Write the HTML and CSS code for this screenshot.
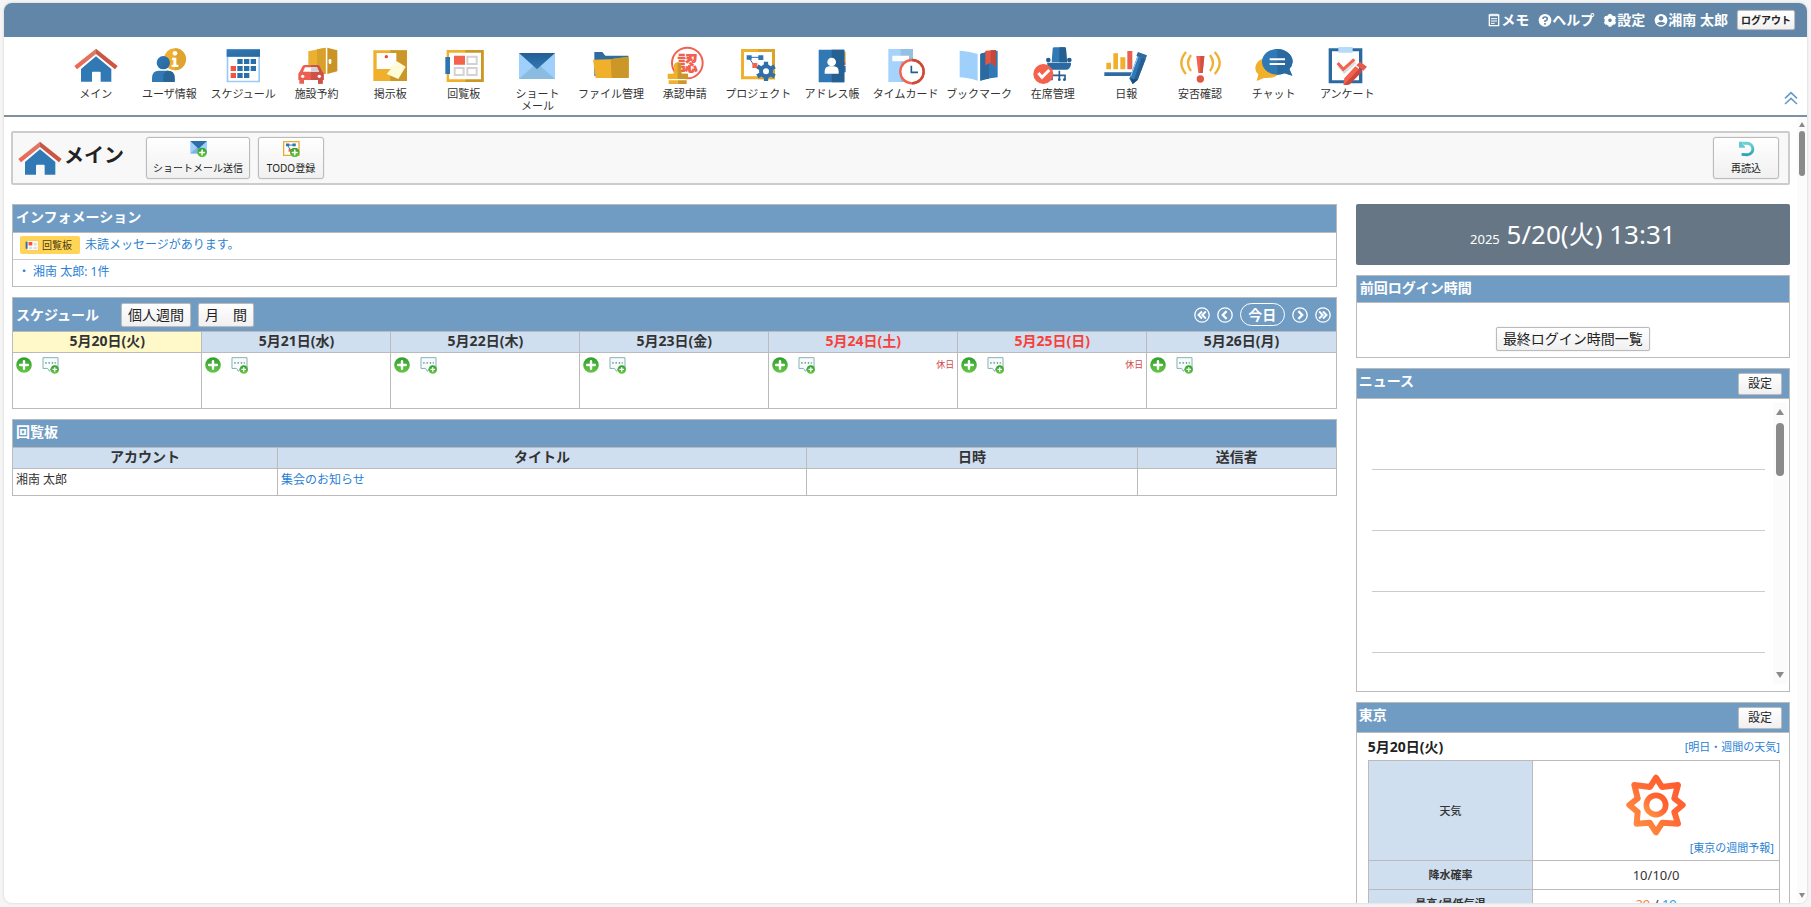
FILE: index.html
```
<!DOCTYPE html>
<html lang="ja">
<head>
<meta charset="utf-8">
<title>メイン</title>
<link rel="stylesheet" href="styles.css">
</head>
<body>
<svg class="defs" aria-hidden="true">
  <defs>
    <linearGradient id="g-green" x1="0" y1="0" x2="0" y2="1"><stop offset="0" stop-color="#2f9e2f"/><stop offset="1" stop-color="#66c844"/></linearGradient>
    <linearGradient id="g-blue" x1="0" y1="0" x2="1" y2="1"><stop offset="0" stop-color="#3079b9"/><stop offset="1" stop-color="#2a679b"/></linearGradient>
    <linearGradient id="g-navy" x1="0" y1="0" x2="0" y2="1"><stop offset="0" stop-color="#225e92"/><stop offset="1" stop-color="#3079b9"/></linearGradient>
    <linearGradient id="g-teal" x1="0" y1="0" x2="0" y2="1"><stop offset="0" stop-color="#6fd0d6"/><stop offset="1" stop-color="#2aa6b4"/></linearGradient>
    <linearGradient id="g-sun" x1="1" y1="0" x2="0" y2="1"><stop offset="0" stop-color="#ff5a2c"/><stop offset=".45" stop-color="#ff6a35"/><stop offset="1" stop-color="#ff9445"/></linearGradient>
    <linearGradient id="g-roof" x1="0" y1="0" x2="1" y2="0"><stop offset="0" stop-color="#f2644f"/><stop offset=".5" stop-color="#d97a6c"/><stop offset=".5" stop-color="#c25a4a"/><stop offset="1" stop-color="#d4513f"/></linearGradient>
    <symbol id="i-home" viewBox="0 0 132 102">
      <path d="M66 25 112 63V101H80V74Q80 71 77 71H57Q54 71 54 74V101H21V63Z" fill="#3079b4"/>
      <path d="M66 2 131 54 123 64 66 18 9 64 1 54Z" fill="url(#g-roof)"/>
    </symbol>
    <symbol id="i-plus" viewBox="0 0 46 46">
      <circle cx="23" cy="23" r="22.500" fill="url(#g-green)"/>
      <path d="M23 12V34M12 23H34" stroke="#fff" stroke-width="7" stroke-linecap="round"/>
    </symbol>
    <symbol id="i-msg" viewBox="0 0 52 52">
      <path d="M3 2H49V35H28L23 44 17 35H3Z" fill="#f6fbfb" stroke="#86b0b4" stroke-width="3"/>
      <path d="M10 18H14M20 18H24M30 18H34M39 18H42" stroke="#75979c" stroke-width="5"/>
      <circle cx="39" cy="38" r="13" fill="url(#g-green)"/>
      <path d="M39 31V45M32 38H46" stroke="#fff" stroke-width="4"/>
    </symbol>
  </defs>
</svg>

<div class="frame">
  <header class="topbar">
    <a href="#" class="toplink"><svg class="ti" viewBox="0 0 36 42"><path d="M4 6H32V38H4Z" fill="none" stroke="#fff" stroke-width="4"/><path d="M9 2V10M15 2V10M21 2V10M27 2V10" stroke="#fff" stroke-width="3"/><path d="M9 17H27M9 24H27M9 31H20" stroke="#fff" stroke-width="3"/></svg>メモ</a>
    <a href="#" class="toplink"><svg class="ti" viewBox="0 0 42 42"><circle cx="21" cy="22" r="19" fill="#fff"/><path d="M15 18Q15 12 21 12 28 12 28 18 28 22 21 24V27" fill="none" stroke="#6186a8" stroke-width="5"/><path d="M21 30V35" stroke="#6186a8" stroke-width="5"/></svg>ヘルプ</a>
    <a href="#" class="toplink"><svg class="ti" viewBox="0 0 42 42"><circle cx="21" cy="22" r="11" fill="none" stroke="#fff" stroke-width="11"/><path d="M21 3V10M21 34V41M4.500 12.500 11 16M31 28 37.500 31.500M4.500 31.500 11 28M31 16 37.500 12.500" stroke="#fff" stroke-width="9"/></svg>設定</a>
    <a href="#" class="toplink"><svg class="ti" viewBox="0 0 42 42"><circle cx="21" cy="22" r="19" fill="#fff"/><circle cx="21" cy="16" r="7" fill="#6186a8"/><path d="M8 31Q14 26 21 26T34 31Q29 37 21 37T8 31Z" fill="#6186a8"/></svg>湘南 太郎</a>
    <button type="button" class="btn btn-logout">ログアウト</button>
  </header>

  <nav class="nav">
    <ul class="navlist">
      <li><a href="#"><svg viewBox="216 135 144 120"><use href="#i-home" x="222" y="144" width="132" height="102"/></svg><span>メイン</span></a></li>
      <li><a href="#"><svg viewBox="438 135 144 120"><circle cx="528" cy="178" r="33" fill="#efb030"/><path d="M528 145A33 33 0 0 1 528 211Z" fill="#dfa42f"/><circle cx="528" cy="160" r="7" fill="#fff"/><path d="M519 173H532V194H538V201H518V194H523V180H519Z" fill="#fff"/><circle cx="493" cy="188" r="20" fill="url(#g-blue)"/><path d="M459 246V234Q459 212 480 212H506Q527 212 527 234V246Z" fill="#3079b4"/><path d="M493 222V246H527V234Q527 212 506 212H504Z" fill="#2a6597"/></svg><span>ユーザ情報</span></a></li>
      <li><a href="#"><svg viewBox="659 135 144 120"><path d="M682 148H782V247H682Z" fill="#9acbf8"/><path d="M687 171H777V242H687Z" fill="#fff"/><path d="M682 148H782V170H682Z" fill="url(#g-blue)"/><path d="M714 177H730V192H714ZM734 177H750V192H734ZM754 177H770V192H754ZM714 198H730V213H714ZM734 198H750V213H734ZM754 198H770V213H754ZM714 219H730V234H714ZM734 219H750V234H734Z" fill="#2870ac"/><path d="M694 198H710V213H694ZM694 219H710V234H694Z" fill="#f2543f"/></svg><span>スケジュール</span></a></li>
      <li><a href="#"><svg viewBox="878 135 144 120"><path d="M924 154 976 143V222H924Z" fill="#eab032"/><path d="M950 148 976 143V222H950Z" fill="#d9a12b"/><path d="M981 143 1011 151V214L981 222Z" fill="#c99425"/><rect x="985" y="177" width="8" height="15" rx="4" fill="#fff"/><path d="M898 215 907 198Q909 195 913 195H951Q955 195 957 198L966 215Q970 218 970 223V240H967V251H953V240H911V251H897V240H894V223Q894 218 898 215Z" fill="#ec5f50"/><path d="M932 195H951Q955 195 957 198L966 215Q970 218 970 223V240H967V251H953V240H932Z" fill="#cc5146"/><path d="M908 215 914 202H950L956 215Z" fill="#fff"/><path d="M932 202H950L956 215H932Z" fill="#cfd3d6"/><circle cx="907" cy="229" r="5" fill="#fff"/><circle cx="957" cy="229" r="5" fill="#fff"/></svg><span>施設予約</span></a></li>
      <li><a href="#"><svg viewBox="1099 135 144 120"><path d="M1121 151H1222V243H1121Z" fill="#f0b02c"/><path d="M1172 151H1222V243H1172Z" fill="#cb9728"/><path d="M1192 184 1218 200 1196 237 1161 222Z" fill="#fffbd6"/><path d="M1131 159H1190V207H1131Z" fill="#fff"/><path d="M1190 184V207H1168Z" fill="#fffbd6"/><circle cx="1160" cy="170" r="5" fill="#f2443a"/></svg><span>掲示板</span></a></li>
      <li><a href="#"><svg viewBox="60 45 144 120"><path d="M80 60H191V156H80Z" fill="#f0b02c"/><path d="M136 60H191V156H136Z" fill="#cb9728"/><path d="M87 68H183V148H87Z" fill="#fff"/><path d="M76 81H90V132H76Z" fill="#2e74b0"/><path d="M102 77H135V104H102Z" fill="#f4614c"/><path d="M142 80H170V102H142ZM104 114H131V135H104ZM142 114H170V135H142Z" fill="none" stroke="#d2d2d2" stroke-width="6"/></svg><span>回覧板</span></a></li>
      <li><a href="#"><svg viewBox="281 45 144 120"><path d="M299 69H407V147H299Z" fill="#9fd0fb"/><path d="M299 147 353 99 407 147Z" fill="#8bbce0"/><path d="M299 69H407L353 118Z" fill="url(#g-navy)"/></svg><span>ショート<br>メール</span></a></li>
      <li><a href="#"><svg viewBox="503 45 144 120"><path d="M525 66H549L558 77H627V138H525Z" fill="#2f6d9f"/><path d="M521 89 572 88 628 80V144H529Z" fill="#f0b02c"/><path d="M574 88 628 80V144H577Z" fill="#cb9728"/></svg><span>ファイル管理</span></a></li>
      <li><a href="#"><svg viewBox="722 45 144 120"><circle cx="801" cy="99" r="46" fill="#fff" stroke="#f2604e" stroke-width="6"/><text x="802" y="122" text-anchor="middle" class="seal">認</text><path d="M761 111Q759 99 771 97 785 99 783 111 780 120 784 131H803V147H742V131H759Q765 120 761 111Z" fill="#f0b02c"/><path d="M772 97Q785 99 783 111 780 120 784 131H803V147H772Z" fill="#cb9728"/><path d="M745 151H772V162H745Z" fill="#f0b02c"/><path d="M772 151H799V162H772Z" fill="#cb9728"/></svg><span>承認申請</span></a></li>
      <li><a href="#"><svg viewBox="943 45 144 120"><path d="M964 57H1066V148H964Z" fill="#f0b02c"/><path d="M1015 57H1066V148H1015Z" fill="#dca32b"/><path d="M973 66H1057V139H973Z" fill="#fff"/><path d="M987 82H1024M987 82 1006 110" stroke="#2e74b0" stroke-width="3" fill="none"/><path d="M981 76H996V89H981ZM1016 76H1031V90H1016Z" fill="#2e74b0"/><path d="M998 99H1013V114H998Z" fill="#f4614c"/><circle cx="1039" cy="124" r="15" fill="none" stroke="#2f6fa8" stroke-width="12"/><path d="M1039 95V105M1039 143V153M1013 109 1023 115M1055 133 1065 139M1013 139 1023 133M1055 115 1065 109" stroke="#2f6fa8" stroke-width="13"/></svg><span>プロジェクト</span></a></li>
      <li><a href="#"><svg viewBox="1165 45 144 120"><path d="M1262 65H1278V95H1262Z" fill="#e3a92d"/><path d="M1262 95H1278V105H1262Z" fill="#f4614c"/><path d="M1262 108H1278V127H1262Z" fill="#2f6fa8"/><path d="M1197 59H1274V157H1197Z" fill="#3079b4"/><path d="M1236 59H1274V157H1236Z" fill="#265f92"/><circle cx="1236" cy="96" r="13" fill="#fff"/><path d="M1215 131V123Q1216 110 1229 109H1243Q1256 110 1257 123V131Z" fill="#fff"/></svg><span>アドレス帳</span></a></li>
      <li><a href="#"><svg viewBox="6 45 144 120"><path d="M25 57H99V156H25Z" fill="#a5d3fb"/><path d="M62 57H99V156H62Z" fill="#93c0e4"/><path d="M37 77H87V94H37Z" fill="#fff"/><circle cx="96" cy="125" r="35" fill="#fff" stroke="#f2604e" stroke-width="7"/><path d="M96 90A35 35 0 0 1 96 160" fill="none" stroke="#cb4a38" stroke-width="7"/><path d="M94 107V127H114" fill="none" stroke="#225e92" stroke-width="5"/></svg><span>タイムカード</span></a></li>
      <li><a href="#"><svg viewBox="226 45 144 120"><path d="M240 62Q272 64 294 72V152Q272 145 240 142Z" fill="#9fd0fb"/><path d="M302 72Q318 64 354 62V142Q324 144 302 152Z" fill="#3079b4"/><path d="M302 72Q310 67 328 65V146Q312 148 302 152Z" fill="#2a6aa0"/><path d="M317 62 349 60V110L333 98 317 106Z" fill="#e25646"/><path d="M333 61 349 60V110L333 98Z" fill="#c24a3d"/></svg><span>ブックマーク</span></a></li>
      <li><a href="#"><svg viewBox="446 45 144 120"><path d="M517 56Q517 52 522 52H552Q557 52 557 56L560 97H514Z" fill="#3079b4"/><path d="M537 52H552Q557 52 557 56L560 97H537Z" fill="#265f92"/><circle cx="504" cy="90" r="7" fill="#225e92"/><circle cx="567" cy="90" r="7" fill="#225e92"/><path d="M500 98H572V104Q568 119 558 119H512Q502 116 500 98Z" fill="#2a6aa0"/><path d="M537 122V150M515 151V136H554V151" stroke="#2a5f90" stroke-width="5" fill="none"/><circle cx="537" cy="149" r="4" fill="#225e92"/><circle cx="552" cy="149" r="4" fill="#225e92"/><circle cx="489" cy="132" r="30" fill="#f4614c"/><path d="M474 129 485 142 507 120" fill="none" stroke="#fff" stroke-width="9"/></svg><span>在席管理</span></a></li>
      <li><a href="#"><svg viewBox="668 45 144 120"><path d="M681 98H695V118H681ZM702 70H716V118H702ZM723 82H738V118H723Z" fill="#f0b02c"/><path d="M744 63H759V118H744Z" fill="#e8604f"/><path d="M675 127H760V138H675Z" fill="#2e6ba0"/><path d="M775 76 799 87 775 150 760 162 750 146Z" fill="#3079b4"/><path d="M787 82 799 87 775 150 760 162Z" fill="#265f92"/><path d="M752 142 759 147 775 148 760 162Z" fill="#1c4f7c"/><path d="M776 66 803 76 799 87 771 77Z" fill="#2e6ba0"/><path d="M754 139 776 80" stroke="#9fd0fb" stroke-width="3"/></svg><span>日報</span></a></li>
      <li><a href="#"><svg viewBox="888 45 144 120"><path d="M949 78H973L968 129H955Z" fill="#f4614c"/><path d="M961 78H973L968 129H961Z" fill="#cf5142"/><circle cx="961" cy="147" r="11" fill="#e25646"/><path d="M918 66Q890 99 918 132M933 75Q915 99 933 123M1004 66Q1034 99 1004 132M990 75Q1008 99 990 123" fill="none" stroke="#efb030" stroke-width="7"/></svg><span>安否確認</span></a></li>
      <li><a href="#"><svg viewBox="1109 45 144 120"><path d="M1144 87Q1125 96 1125 116 1126 126 1134 133L1129 153 1151 144Q1187 146 1196 130L1160 118Z" fill="#f0b02c"/><path d="M1191 57C1216 57 1237 74 1237 95Q1236 108 1227 117L1236 137 1213 130Q1203 134 1191 134C1166 134 1145 116 1145 95 1145 74 1166 57 1191 57Z" fill="#3079b4"/><path d="M1191 57C1216 57 1237 74 1237 95Q1236 108 1227 117L1236 137 1213 130Q1203 134 1191 134Z" fill="#2a6aa0"/><path d="M1168 88H1214M1168 102H1214" stroke="#fff" stroke-width="6"/></svg><span>チャット</span></a></li>
      <li><a href="#"><svg viewBox="1330 45 144 120"><path d="M1347 55H1448V160H1347Z" fill="#2a6aa0"/><path d="M1357 64H1438V151H1357Z" fill="#fff"/><path d="M1376 51H1419V68H1376Z" fill="#b4dbfa"/><path d="M1377 108 1394 127 1427 97" fill="none" stroke="#dedede" stroke-width="8"/><path d="M1374 99 1391 118 1424 88" fill="none" stroke="#f2604e" stroke-width="9"/><path d="M1441 95 1462 110 1451 122 1430 106Z" fill="#e85747"/><path d="M1427 109 1448 124 1410 163 1391 167 1394 145Z" fill="#f2604e"/><path d="M1438 117 1448 124 1410 163 1391 167Z" fill="#c84a3c"/></svg><span>アンケート</span></a></li>
    </ul>
    <button type="button" class="collapse" aria-label="閉じる"><svg viewBox="0 0 42 42"><path d="M3 22 21 5 39 22M3 39 21 22 39 39" fill="none" stroke="#659cca" stroke-width="5"/></svg></button>
  </nav>

  <div class="body">
    <main class="content">
      <div class="toolbar">
        <h1 class="title"><svg viewBox="0 0 132 102"><use href="#i-home"/></svg><span>メイン</span></h1>
        <div class="tools">
          <button type="button" class="btn tool tool-mail"><svg viewBox="566 424 56 52"><path d="M569 427H620V465H569Z" fill="#9fd0fb"/><path d="M569 465 594 442 620 465Z" fill="#7fb2dc"/><path d="M569 427H620L594 451Z" fill="#2b6ea8"/><use href="#i-plus" x="590" y="447" width="30" height="30"/></svg>ショートメール送信</button>
          <button type="button" class="btn tool"><svg viewBox="847 424 56 52"><path d="M851 429H898V471H851Z" fill="#fff" stroke="#efa92c" stroke-width="4"/><path d="M863 439 882 440M862 439 872 455" stroke="#2e74b0" stroke-width="3"/><path d="M858 435H868V443H858ZM878 435H888V443H878Z" fill="#2e74b0"/><path d="M866 451H875V460H866Z" fill="#f4614c"/><use href="#i-plus" x="870" y="447" width="30" height="30"/></svg>TODO登録</button>
        </div>
        <button type="button" class="btn tool"><svg viewBox="1190 424 56 52"><path d="M1207 434H1220A17 17 0 0 1 1220 469L1203 468" fill="none" stroke="url(#g-teal)" stroke-width="9"/><path d="M1195 429V448H1213V443L1206 438 1207 429Z" fill="#63c8cf"/></svg>再読込</button>
      </div>

      <div class="cols">
        <div class="left">
          <section class="panel">
            <h2 class="head">インフォメーション</h2>
            <div class="info"><a href="#" class="badge"><svg viewBox="76 148 44 34"><path d="M82 150H118V181H82Z" fill="#fff" stroke="#f3b94a" stroke-width="2"/><path d="M78 153H84V175H78Z" fill="#2870ac"/><path d="M87 154H99V165H87Z" fill="#f2543f"/><path d="M103 156H113V165H103ZM88 169H99V177H88ZM103 169H113V177H103Z" fill="#dedede"/></svg>回覧板</a><a href="#">未読メッセージがあります。</a></div>
            <div class="info info-user"><a href="#">・ 湘南 太郎: 1件</a></div>
          </section>

          <section class="panel">
            <div class="head head-sched">
              <h2>スケジュール</h2>
              <button type="button" class="btn btn-mid">個人週間</button>
              <button type="button" class="btn btn-mid">月　間</button>
              <div class="pager">
                <button type="button" aria-label="前週"><svg viewBox="0 0 50 50"><circle cx="25" cy="25" r="22.500" fill="none" stroke="#fff" stroke-width="4"/><path d="M25 14 14 25 25 36M37 14 26 25 37 36" fill="none" stroke="#fff" stroke-width="6"/></svg></button>
                <button type="button" aria-label="前日"><svg viewBox="0 0 50 50"><circle cx="25" cy="25" r="22.500" fill="none" stroke="#fff" stroke-width="4"/><path d="M30 13 18 25 30 37" fill="none" stroke="#fff" stroke-width="7"/></svg></button>
                <button type="button" class="today">今日</button>
                <button type="button" aria-label="翌日"><svg viewBox="0 0 50 50"><circle cx="25" cy="25" r="22.500" fill="none" stroke="#fff" stroke-width="4"/><path d="M20 13 32 25 20 37" fill="none" stroke="#fff" stroke-width="7"/></svg></button>
                <button type="button" aria-label="翌週"><svg viewBox="0 0 50 50"><circle cx="25" cy="25" r="22.500" fill="none" stroke="#fff" stroke-width="4"/><path d="M13 14 24 25 13 36M25 14 36 25 25 36" fill="none" stroke="#fff" stroke-width="6"/></svg></button>
              </div>
            </div>
            <table class="grid week">
              <thead><tr><th class="now">5月20日(火)</th><th>5月21日(水)</th><th>5月22日(木)</th><th>5月23日(金)</th><th class="off">5月24日(土)</th><th class="off">5月25日(日)</th><th>5月26日(月)</th></tr></thead>
              <tbody><tr>
                <td><div class="day"><a href="#" aria-label="追加"><svg><use href="#i-plus"/></svg></a><a href="#" aria-label="メモ追加"><svg><use href="#i-msg"/></svg></a></div></td>
                <td><div class="day"><a href="#" aria-label="追加"><svg><use href="#i-plus"/></svg></a><a href="#" aria-label="メモ追加"><svg><use href="#i-msg"/></svg></a></div></td>
                <td><div class="day"><a href="#" aria-label="追加"><svg><use href="#i-plus"/></svg></a><a href="#" aria-label="メモ追加"><svg><use href="#i-msg"/></svg></a></div></td>
                <td><div class="day"><a href="#" aria-label="追加"><svg><use href="#i-plus"/></svg></a><a href="#" aria-label="メモ追加"><svg><use href="#i-msg"/></svg></a></div></td>
                <td><div class="day"><a href="#" aria-label="追加"><svg><use href="#i-plus"/></svg></a><a href="#" aria-label="メモ追加"><svg><use href="#i-msg"/></svg></a><span class="holiday">休日</span></div></td>
                <td><div class="day"><a href="#" aria-label="追加"><svg><use href="#i-plus"/></svg></a><a href="#" aria-label="メモ追加"><svg><use href="#i-msg"/></svg></a><span class="holiday">休日</span></div></td>
                <td><div class="day"><a href="#" aria-label="追加"><svg><use href="#i-plus"/></svg></a><a href="#" aria-label="メモ追加"><svg><use href="#i-msg"/></svg></a></div></td>
              </tr></tbody>
            </table>
          </section>

          <section class="panel">
            <h2 class="head">回覧板</h2>
            <table class="grid circular">
              <colgroup><col class="c20"><col class="c40"><col class="c25"><col class="c15"></colgroup>
              <thead><tr><th>アカウント</th><th>タイトル</th><th>日時</th><th>送信者</th></tr></thead>
              <tbody><tr><td>湘南 太郎</td><td><a href="#">集会のお知らせ</a></td><td></td><td></td></tr></tbody>
            </table>
          </section>
        </div>

        <aside class="right">
          <div class="clock"><small>2025</small> 5/20(火) 13:31</div>

          <section class="panel">
            <h2 class="head head-side">前回ログイン時間</h2>
            <div class="login"><button type="button" class="btn btn-mid">最終ログイン時間一覧</button></div>
          </section>

          <section class="panel">
            <div class="head head-set"><h2>ニュース</h2><button type="button" class="btn btn-set">設定</button></div>
            <div class="news">
              <ul><li></li><li></li><li></li><li></li></ul>
              <div class="scroll" aria-hidden="true"><i class="up"></i><i class="thumb"></i><i class="down"></i></div>
            </div>
          </section>

          <section class="panel">
            <div class="head head-set"><h2>東京</h2><button type="button" class="btn btn-set">設定</button></div>
            <div class="weather">
              <div class="wtop"><b>5月20日(火)</b><a href="#">[明日・週間の天気]</a></div>
              <table class="wtable">
                <tr><th>天気</th><td class="sky">
                  <svg viewBox="859 252 180 186"><path d="M949 263 967 291 1015 285 1004 325 1029 345 1004 366 1015 401 968 398 949 427 930 398 891 401 894 366 869 345 894 325 884 285 931 291Z" fill="none" stroke="url(#g-sun)" stroke-width="18" stroke-linejoin="round"/><circle cx="949" cy="345" r="29" fill="none" stroke="url(#g-sun)" stroke-width="17"/></svg>
                  <div class="wlink"><a href="#">[東京の週間予報]</a></div></td></tr>
                <tr><th class="strong">降水確率</th><td>10/10/0</td></tr>
                <tr><th class="strong">最高/最低気温</th><td><span class="hi">29</span> / <span class="lo">19</span></td></tr>
              </table>
            </div>
          </section>
        </aside>
      </div>
    </main>
    <div class="scroll page-scroll" aria-hidden="true"><i class="up"></i><i class="thumb"></i><i class="down"></i></div>
  </div>
</div>
</body>
</html>
```
FILE: styles.css
```
* { box-sizing: border-box; }
body {
  margin: 0;
  height: 100vh;
  padding: 3px 4px 4px;
  background: #f5f5f5;
  color: #333;
  font: 12px/16px "Noto Sans", "Noto Sans CJK JP", sans-serif;
  overflow: hidden;
}
.defs { position: absolute; width: 0; height: 0; }
svg { display: block; }
a { color: #2a7fd4; text-decoration: none; }
h1, h2, ul { margin: 0; padding: 0; }
h2 { font-size: 14px; line-height: 20px; }
ul { list-style: none; }
button { font-family: inherit; cursor: pointer; }

.frame {
  display: flex;
  flex-direction: column;
  height: 100%;
  background: #fff;
  border-radius: 8px;
  box-shadow: 0 0 2px 1px #e2e2e2;
  overflow: hidden;
}

/* top bar */
.topbar {
  display: flex;
  align-items: center;
  justify-content: flex-end;
  gap: 9px;
  height: 34px;
  flex: none;
  padding: 0 12px 1px 0;
  background: #6186a8;
}
.toplink { display: flex; align-items: center; color: #fff; font-size: 14px; font-weight: bold; }
.ti { width: 14px; height: 14px; }
.btn {
  border: 1px solid #bbb;
  border-radius: 2px;
  background: linear-gradient(#fff, #f0f0f0);
  box-shadow: 0 0 1px #aaa;
  color: #222;
  padding: 0;
}
.btn-logout { width: 58px; height: 20px; font-size: 10px; font-weight: bold; }
.btn-mid { height: 24px; padding: 0 6px; font-size: 14px; line-height: 20px; }
.btn-set { width: 44px; height: 22px; font-size: 12px; line-height: 16px; }

/* icon navigation */
.nav {
  position: relative;
  flex: none;
  height: 80px;
  padding: 8px 423px 0 55px;
  border-bottom: 2px solid #7f90a1;
}
.navlist { display: grid; grid-template-columns: repeat(18, minmax(0, 1fr)); }
.navlist a {
  display: flex;
  flex-direction: column;
  align-items: center;
  gap: 3px;
  color: #333;
  font-size: 11px;
  line-height: 12px;
  text-align: center;
  white-space: nowrap;
}
.navlist svg { width: 48px; height: 40px; }
.seal { font: 900 62px "Noto Sans CJK JP", sans-serif; fill: #f2604e; }
.collapse {
  position: absolute;
  right: 9px;
  bottom: 10px;
  padding: 0;
  border: 0;
  background: none;
}
.collapse svg { width: 14px; height: 14px; }

/* page body */
.body { display: flex; flex: 1; min-height: 0; }
.content { flex: 1; min-width: 0; overflow: hidden; padding: 14px 7px 0 7px; }
.scroll {
  display: flex;
  flex-direction: column;
  align-items: center;
  flex: none;
  background: #fbfbfb;
}
.scroll i { display: block; }
.up, .down { border: 4px solid transparent; }
.up { border-top: 0; border-bottom: 6px solid #8a8a8a; }
.down { border-bottom: 0; border-top: 6px solid #8a8a8a; margin-top: auto; }
.thumb { border-radius: 4px; background: #8a8a8a; }
.page-scroll { width: 10px; padding: 5px 0; }
.page-scroll .up, .page-scroll .down { border-left-width: 3px; border-right-width: 3px; }
.page-scroll .up { border-bottom-width: 5px; }
.page-scroll .down { border-top-width: 5px; }
.page-scroll .thumb { width: 6px; height: 45px; margin-top: 4px; }

.toolbar {
  display: flex;
  align-items: center;
  height: 54px;
  padding: 0 9px 0 5px;
  border: 2px solid #ccc;
  border-radius: 2px;
  background: #f8f8f8;
}
.title { display: flex; align-items: center; gap: 2px; font-size: 20px; line-height: 30px; color: #222; width: 128px; }
.title svg { width: 44px; height: 34px; }
.title span { padding-bottom: 4px; }
.tools { display: flex; gap: 8px; margin-right: auto; }
.tool {
  display: flex;
  flex-direction: column;
  align-items: center;
  justify-content: center;
  gap: 3px;
  width: 66px;
  height: 42px;
  border-radius: 3px;
  font-size: 10px;
  line-height: 16px;
}
.tool-mail { width: 104px; }
.tool svg { width: 19px; height: 17px; }

.cols { display: grid; grid-template-columns: 1324fr 434fr; gap: 19px; margin: 19px 0 0 1px; align-items: start; }
.left, .right { display: flex; flex-direction: column; gap: 10px; min-width: 0; }
.panel { border: 1px solid #bbb; background: #fff; }
.head { padding: 2px 3px 5px; line-height: 20px; background: #709cc4; color: #fff; border-bottom: 1px solid #bbb; }
.head-side { padding-bottom: 4px; }

.info { display: flex; align-items: center; gap: 5px; height: 26px; padding: 0 7px 2px; font-size: 12px; }
.info-user { height: 27px; padding: 0 5px 3px; border-top: 1px solid #ccc; }
.badge {
  display: flex;
  align-items: center;
  gap: 3px;
  height: 18px;
  padding: 0 8px 0 5px;
  border-radius: 2px;
  background: #ffd457;
  color: #4a3c10;
  font-size: 10px;
}
.badge svg { width: 14px; height: 11px; }

.head-sched { display: flex; align-items: center; gap: 7px; height: 34px; padding: 0 5px 0 3px; }
.head-sched h2 { width: 98px; }
.pager { display: flex; align-items: center; gap: 7px; margin-left: auto; }
.pager button { padding: 0; border: 0; background: none; color: #fff; }
.pager svg { width: 16px; height: 16px; }
.pager .today { width: 45px; height: 23px; border: 1px solid #fff; border-radius: 12px; font-size: 14px; font-weight: bold; line-height: 20px; }

.grid { width: 100%; table-layout: fixed; border-collapse: collapse; }
.grid th { height: 20px; padding: 0 0 2px; font-size: 14px; line-height: 16px; background: #cfdff0; border-bottom: 1px solid #bbb; }
.grid th + th, .grid td + td { border-left: 1px solid #bbb; }
.grid td { padding: 0 3px; }
.week td { height: 56px; vertical-align: top; }
.grid .now { background: #fff9ca; }
.grid .off { color: #f8403a; }
.day { display: flex; align-items: center; gap: 10px; padding-top: 4px; }
.day svg { width: 16px; height: 16px; }
.day a + a svg { width: 17px; height: 17px; }
.holiday { margin-left: auto; color: #d04a4a; font-size: 9px; }
.circular td { height: 27px; padding-bottom: 3px; }
.c20 { width: 20%; }
.c40 { width: 40%; }
.c25 { width: 25%; }
.c15 { width: 15%; }

.clock {
  height: 61px;
  border-radius: 2px;
  background: #667685;
  color: #fff;
  font-size: 26px;
  line-height: 61px;
  text-align: center;
}
.clock small { font-size: 13px; }
.login { display: flex; justify-content: center; padding: 24px 0 6px; }
.head-set { display: flex; justify-content: space-between; align-items: flex-start; padding: 4px 7px 3px 2px; }
.head-set h2 { line-height: 16px; }

.news { display: flex; height: 292px; padding: 4px 2px 7px 15px; }
.news ul { flex: 1; margin-right: 8px; }
.news li { height: 61px; border-bottom: 1px solid #ccc; }
.news li:first-child { height: 67px; }
.news .scroll { width: 14px; padding: 6px 0; }
.news .thumb { width: 8px; height: 53px; margin-top: 8px; }

.weather { padding: 3px 9px 9px 11px; }
.wtop { display: flex; justify-content: space-between; align-items: center; height: 24px; padding-bottom: 2px; }
.wtop b { font-size: 14px; color: #222; }
.wtop a, .wlink { font-size: 11px; }
.wtable { width: 100%; table-layout: fixed; border-collapse: collapse; text-align: center; }
.wtable th, .wtable td { height: 29px; padding: 0; border: 1px solid #bbb; }
.wtable th { width: 40%; background: #cfdff0; font-size: 11px; font-weight: 500; }
.wtable .strong { font-weight: bold; }
.wtable td { font-size: 13px; }
.wtable .sky { padding: 13px 5px 4px; }
.sky svg { width: 60px; height: 62px; margin: 0 auto 4px; }
.wlink { text-align: right; line-height: 16px; }
.hi { color: #ff7f45; }
.lo { color: #2f9be8; }
```
